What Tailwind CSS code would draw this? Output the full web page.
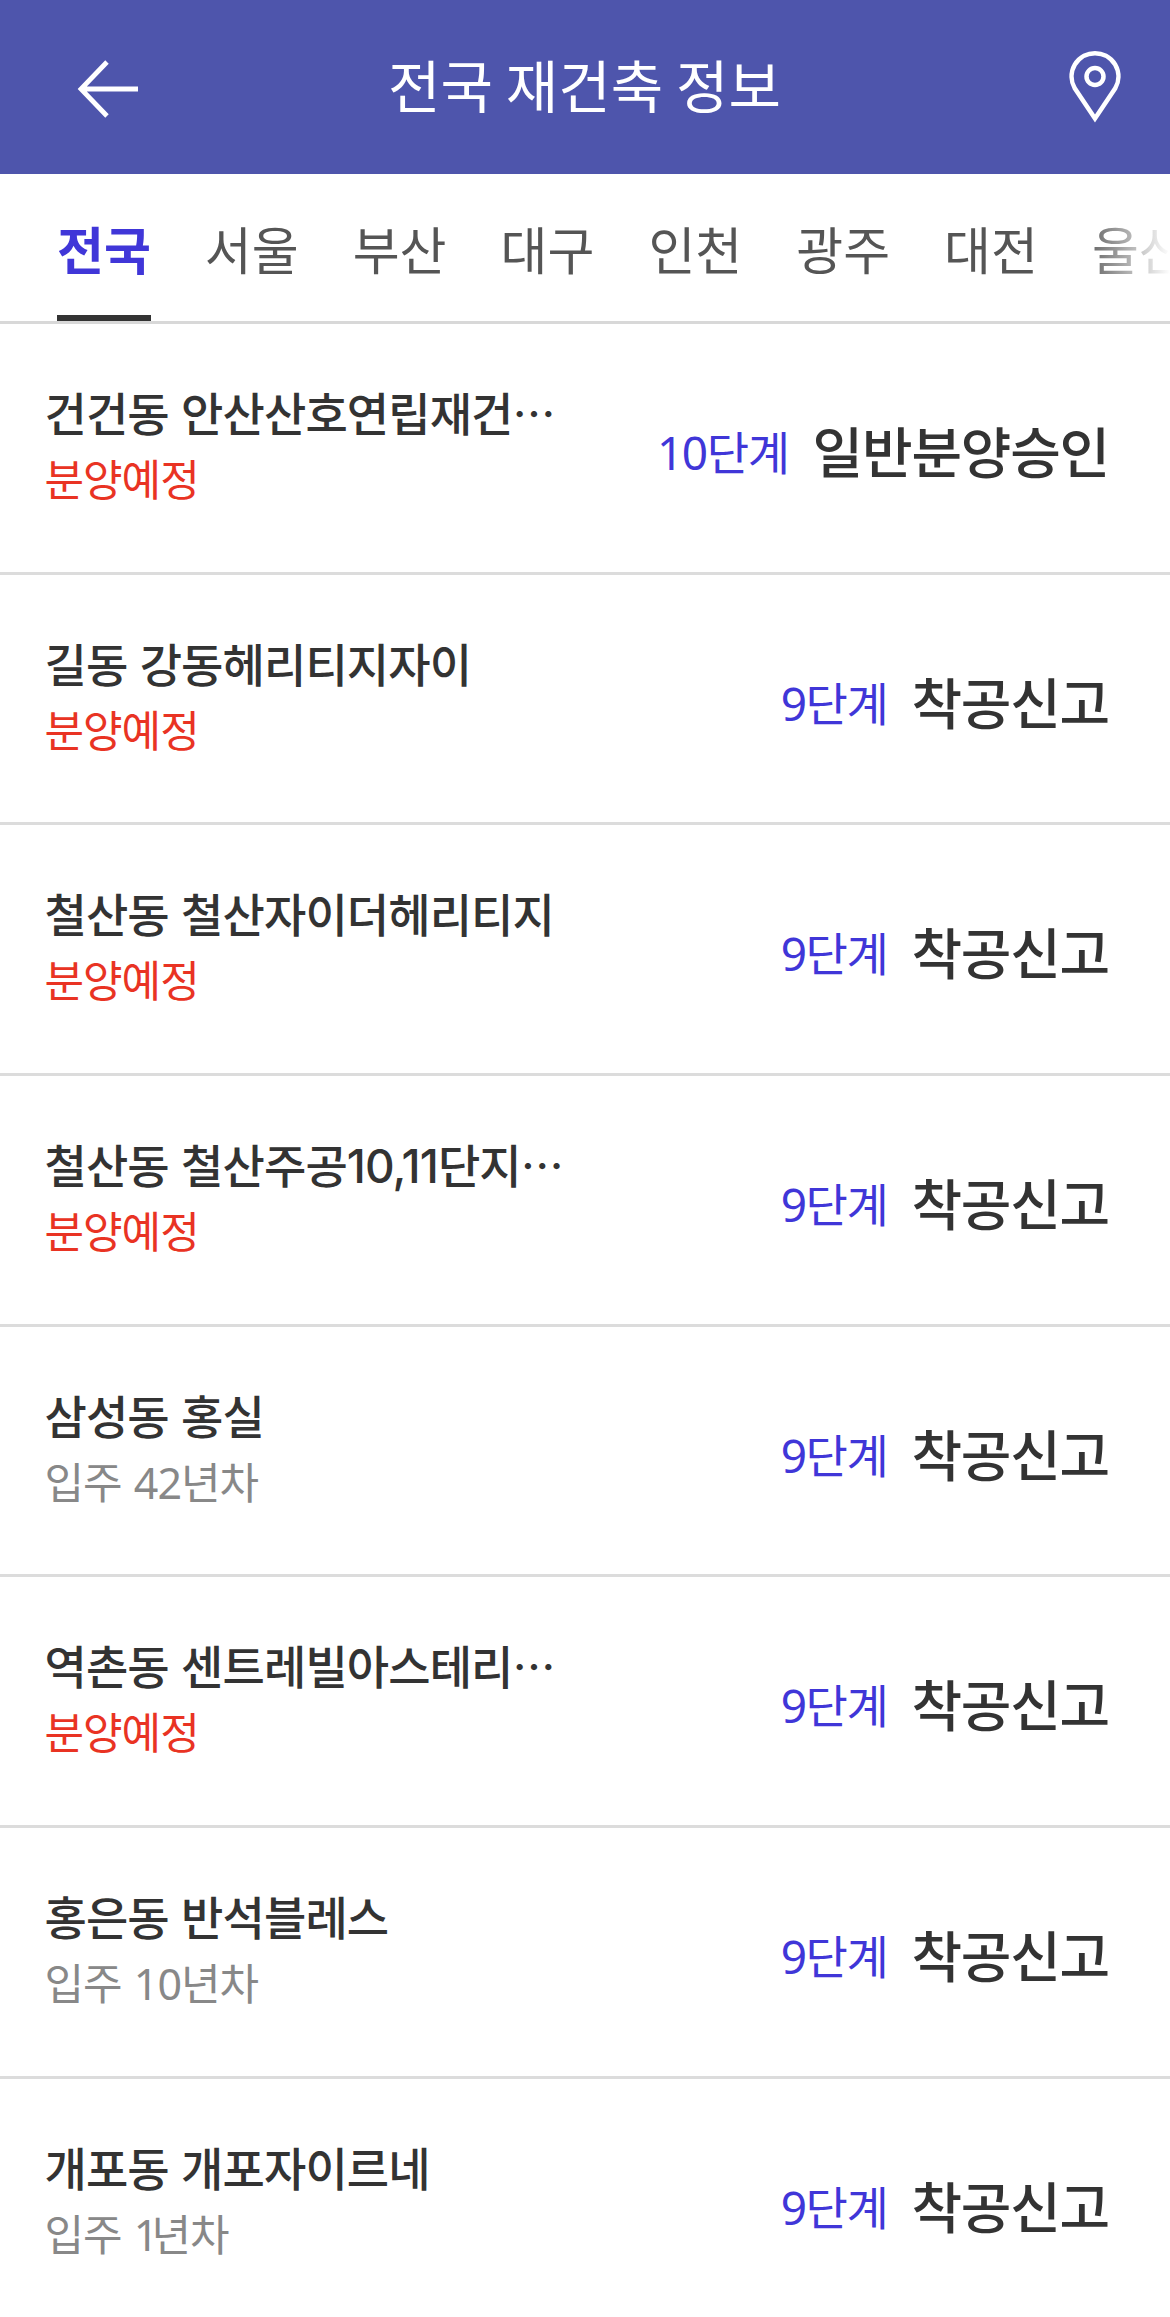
<!DOCTYPE html>
<html lang="ko">
<head>
  <meta charset="UTF-8" />
  <meta name="viewport" content="width=device-width, initial-scale=1.0"/>
  <title>전국 재건축 정보</title>
  <script src="https://cdn.jsdelivr.net/npm/@tailwindcss/browser@4"></script>
</head>
<body class="bg-white h-[2317px] overflow-hidden font-['Noto_Sans','Noto_Sans_CJK_KR',sans-serif] text-[#333]">

  <!-- Header -->
  <header class="h-[174px] bg-[#4e55ac] grid grid-cols-[1fr_auto_1fr] items-center pl-[76px] pr-[46px]">
    <svg class="w-[64px] h-[60px] mt-[3px]" viewBox="0 0 64 60" fill="none" stroke="#fff" stroke-width="4.8">
      <path d="M62 30H4M31 3L5 30L31 57"/>
    </svg>
    <h1 class="text-[57px] leading-[80px] text-white mr-[31px] -mt-[8px] [word-spacing:-3px] font-['Noto_Sans_CJK_KR',sans-serif]">전국 재건축 정보</h1>
    <svg class="w-[58px] h-[76px] justify-self-end" viewBox="0 0 58 76" fill="none" stroke="#fff" stroke-width="4.5">
      <path d="M29 69.500L8.600 39A23.400 23.400 0 1 1 49.400 39Z"/>
      <circle cx="29" cy="27.500" r="8.500"/>
    </svg>
  </header>

  <!-- Region tabs -->
  <nav class="relative h-[150px] border-b-[3px] border-[#d8d8d8] overflow-hidden">
    <ul class="flex gap-[54px] pl-[57px] h-full whitespace-nowrap text-[51px] leading-[149px] text-[#555] font-['Noto_Sans_CJK_KR',sans-serif]">
      <li class="font-bold text-[#4036d8] border-b-[6px] border-[#333]">전국</li>
      <li>서울</li>
      <li>부산</li>
      <li>대구</li>
      <li>인천</li>
      <li>광주</li>
      <li>대전</li>
      <li>울산</li>
    </ul>
    <div class="absolute right-0 top-0 w-[90px] h-full bg-linear-to-r from-white/0 to-white"></div>
  </nav>

  <!-- Project list -->
  <ul id="projectList"></ul>

  <script>
    const projects = [
      { name: '건건동 안산산호연립재건', cut: true, step: 10, stage: '일반분양승인' },
      { name: '길동 강동헤리티지자이', step: 9, stage: '착공신고' },
      { name: '철산동 철산자이더헤리티지', step: 9, stage: '착공신고' },
      { name: '철산동 철산주공10,11단지', cut: true, step: 9, stage: '착공신고' },
      { name: '삼성동 홍실', years: 42, step: 9, stage: '착공신고' },
      { name: '역촌동 센트레빌아스테리', cut: true, step: 9, stage: '착공신고' },
      { name: '홍은동 반석블레스', years: 10, step: 9, stage: '착공신고' },
      { name: '개포동 개포자이르네', years: 1, step: 9, stage: '착공신고' }
    ];

    document.getElementById('projectList').innerHTML = projects.map(p => `
      <li class="h-[250.66px] border-b-[3px] border-[#dcdcdc] flex justify-between pl-[44.5px] pr-[61px] whitespace-nowrap">
        <div class="pt-[57px]">
          <p class="h-[66px] text-[46px] leading-[66px] font-medium tracking-[-0.9px] [word-spacing:1px] font-['Inter','Noto_Sans_CJK_KR',sans-serif]">${p.name}${p.cut ? `<span class="leading-none text-[43px] tracking-[-2px] font-['Noto_Sans_CJK_KR',sans-serif]">…</span>` : ''}</p>
          ${p.years
            ? `<p class="text-[43px] leading-[66px] tracking-[-1px] [word-spacing:2px] text-[#888]">입주 <span class="${p.years === 1 ? 'tracking-[-7px]' : ''}">${p.years}</span>년차</p>`
            : `<p class="text-[43px] leading-[66px] tracking-[-1px] text-[#e93323]">분양예정</p>`}
        </div>
        <div class="flex items-start gap-[24px] pt-[85px]">
          <span class="pt-[3px] text-[46px] leading-[80px] tracking-[-1.400px] text-[#4036d8]">${p.step}단계</span>
          <strong class="text-[55px] leading-[80px] font-medium tracking-[-1.200px] font-['Noto_Sans_CJK_KR',sans-serif]">${p.stage}</strong>
        </div>
      </li>`).join('');
  </script>

</body>
</html>
